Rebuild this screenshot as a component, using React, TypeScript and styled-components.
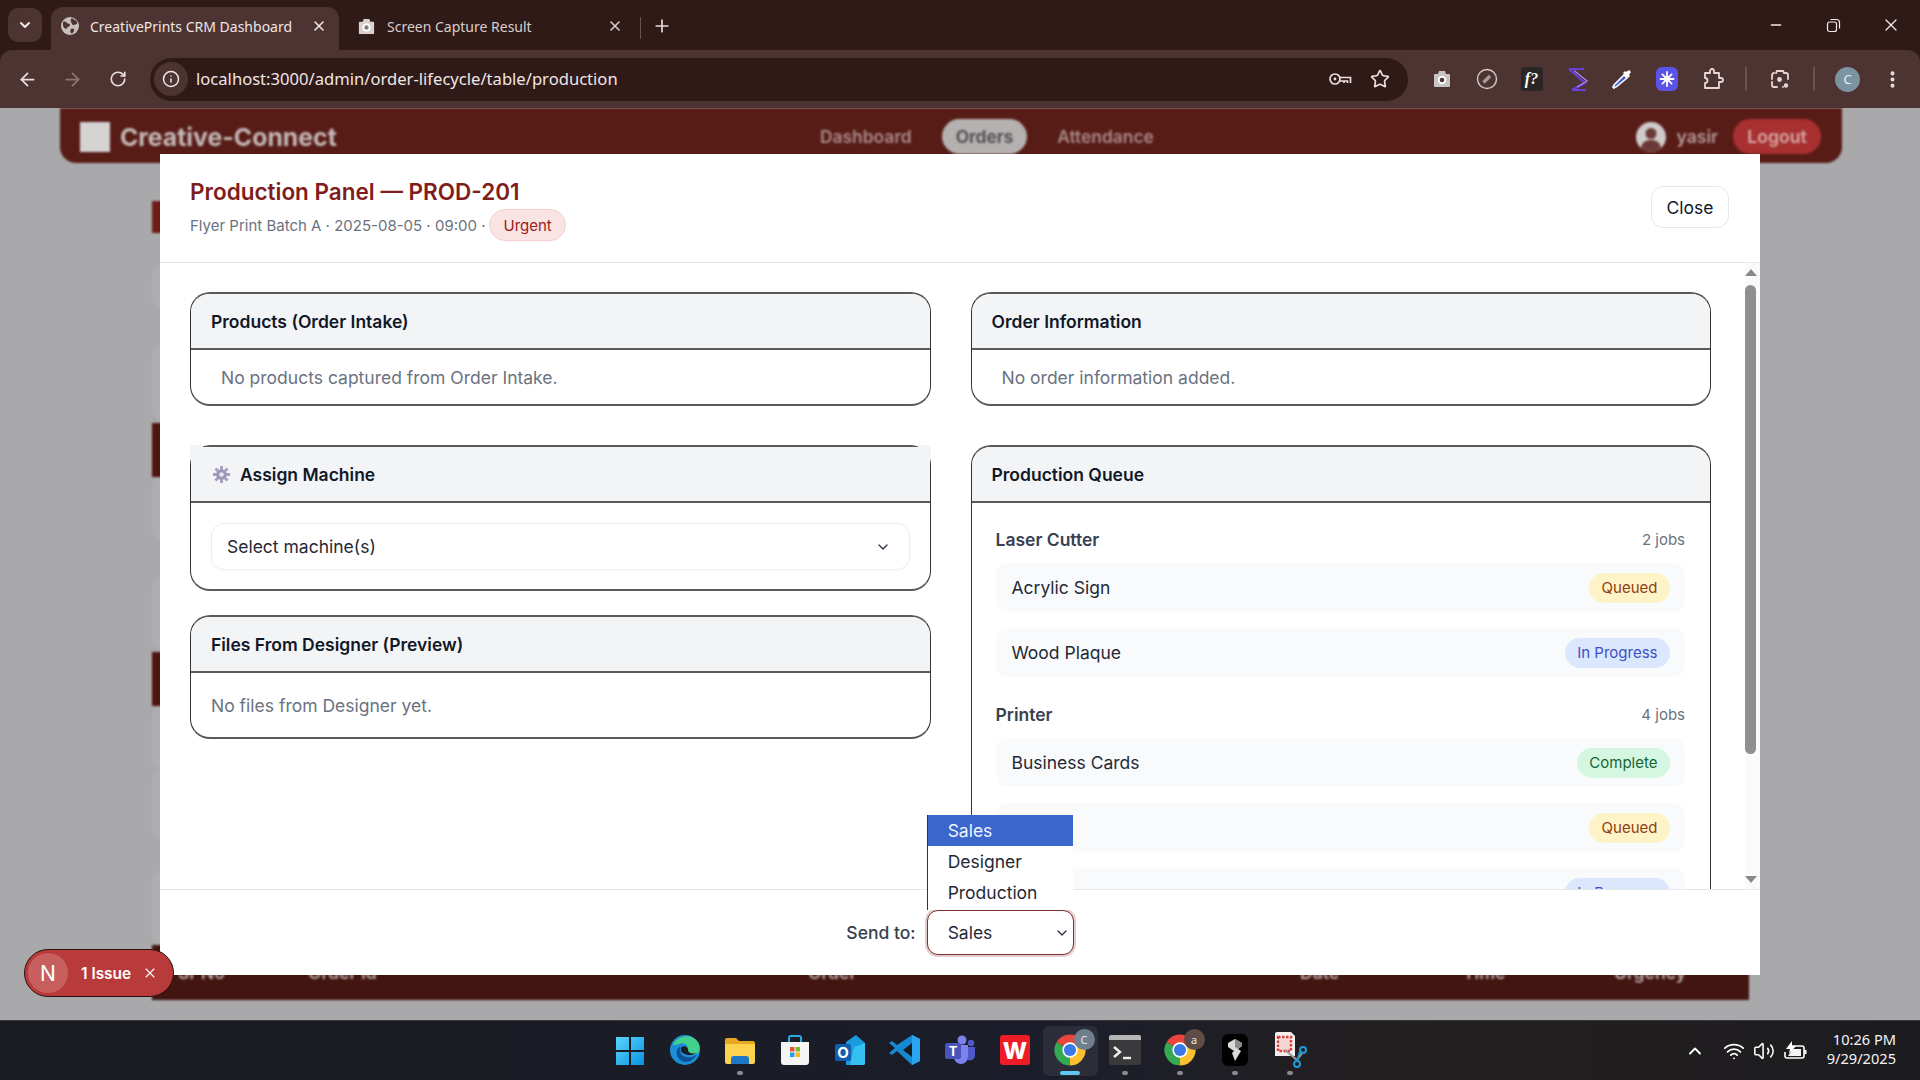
import React from "react";
import styled, { createGlobalStyle } from "styled-components";
import {
  ArrowLeft, ArrowRight, RotateCw, Info, Star, X, Plus, Minus, ChevronDown, ChevronUp,
  MoreVertical, Wifi, Volume2,
} from "lucide-react";

const Global = createGlobalStyle`
  html, body { margin: 0; padding: 0; width: 1920px; height: 1080px; overflow: hidden; background: #2f1a18; }
  * { box-sizing: border-box; }
`;

const Screen = styled.div`
  width: 1920px; height: 1080px; display: flex; flex-direction: column;
  font-family: Inter, "Liberation Sans", sans-serif;
`;

/* ---------- browser chrome ---------- */
const TabStrip = styled.div`
  height: 50px; flex: none; background: #2f1a18; display: flex; align-items: flex-end; padding-left: 8px;
  font-family: "Noto Sans", "Open Sans", sans-serif; color: #e8dedd;
`;
const TabSearch = styled.div`
  width: 34px; height: 34px; margin-bottom: 8px; margin-right: 9px; border-radius: 10px; background: #4d3432;
  display: flex; align-items: center; justify-content: center; color: #f2e9e8;
`;
const Tab = styled.div<{ $active?: boolean }>`
  width: ${(p) => (p.$active ? 288 : 300)}px; height: 43px; display: flex; align-items: center;
  padding: 0 ${(p) => (p.$active ? 12 : 16)}px 5px ${(p) => (p.$active ? 9 : 18)}px; gap: ${(p) => (p.$active ? 10 : 11)}px;
  border-radius: 12px 12px 0 0; font-size: 14px; background: ${(p) => (p.$active ? "#4d3432" : "transparent")};
  color: ${(p) => (p.$active ? "#efe6e5" : "#d9cdcc")};
`;
const TabTitle = styled.span` flex: 1; white-space: nowrap; `;
const TabDivider = styled.div` width: 1px; height: 22px; background: #6a5250; margin: 0 11px 11px 1px; `;
const NewTab = styled.div` margin-bottom: 14px; color: #e8dedd; display: flex; `;
const WindowButtons = styled.div` margin-left: auto; display: flex; height: 50px; align-items: center; `;
const WindowButton = styled.div`
  width: 57.5px; height: 100%; display: flex; align-items: center; justify-content: center; color: #f2ecec;
`;

const Toolbar = styled.div`
  height: 58px; flex: none; background: #4d3432; border-radius: 12px 12px 0 0; display: flex; align-items: center;
  padding: 0 5px; color: #e8dedd; font-family: "Noto Sans", "Open Sans", sans-serif;
`;
const ToolButton = styled.div<{ $dim?: boolean }>`
  width: 45px; height: 45px; flex: none; display: flex; align-items: center; justify-content: center;
  color: ${(p) => (p.$dim ? "#8d7674" : "#eadfde")};
`;
const Omnibox = styled.div`
  flex: 1; height: 43px; margin: 0 11px 0 10px; border-radius: 22px; background: #2f1a18; display: flex; align-items: center;
  padding: 0 18px 0 4px; color: #efe6e5; font-size: 16.6px;
`;
const InfoChip = styled.div`
  width: 34px; height: 34px; border-radius: 50%; background: #4d3432; display: flex; align-items: center; justify-content: center; margin-right: 8px;
`;
const Url = styled.span` flex: 1; white-space: nowrap; padding-bottom: 2px; `;
const OmniIcons = styled.div` display: flex; gap: 18px; align-items: center; color: #eadfde; `;
const Separator = styled.div` width: 2px; height: 24px; background: #6a5250; flex: none; margin: 0 10.5px; `;
const Avatar = styled.div`
  width: 25px; height: 25px; border-radius: 50%; background: #7c93a2; color: #e9eef1; font-size: 13px;
  display: flex; align-items: center; justify-content: center;
`;
const FBadge = styled.div`
  width: 22px; height: 24px; background: #2b2626; border-radius: 3px; color: #fff; font: italic 700 16px "Liberation Serif", serif;
  display: flex; align-items: center; justify-content: center;
`;

/* ---------- blurred page behind the dialog ---------- */
const Viewport = styled.div` flex: 1; position: relative; overflow: hidden; background: #a9a9ab; `;
const Backdrop = styled.div` height: 100%; filter: blur(1.2px); `;
const TopNav = styled.div`
  height: 55px; margin: 0 78px 0 60px; background: #581c17; border-radius: 0 0 16px 16px;
  display: flex; align-items: center; position: relative; padding: 2px 21px 0 20px; color: #c9b4b2;
`;
const Logo = styled.div` width: 30px; height: 30px; background: #d6d3d3; margin-right: 10px; flex: none; `;
const Brand = styled.div` font-size: 24.8px; font-weight: 700; color: #c4b9b8; width: 215px; white-space: nowrap; `;
const NavLinks = styled.div` display: flex; align-items: center; margin-left: 485px; gap: 30px; font-size: 17.4px; font-weight: 600; color: #a98a88; margin-top: -1px; `;
const NavPill = styled.div` padding: 7px 14px; border-radius: 20px; background: #b4b1b0; color: #4a4a4a; `;
const NavUser = styled.div` margin-left: auto; display: flex; align-items: center; font-size: 17.6px; font-weight: 600; color: #b39a98; `;
const UserIcon = styled.svg` width: 30px; height: 30px; margin-right: 10px; `;
const LogoutPill = styled.div` margin-left: 15px; width: 88px; height: 35px; border-radius: 18px; background: #a83030; color: #d8acab; display: flex; align-items: center; justify-content: center; `;
const PageColumn = styled.div` margin: 38px 0 0 152px; width: 1597px; display: flex; flex-direction: column; `;
const PageBlock = styled.div<{ $tone: string; $h: number; $after: number }>`
  height: ${(p) => p.$h}px; margin-bottom: ${(p) => p.$after}px; border-radius: ${(p) => (p.$tone === "card" ? 10 : 0)}px;
  background: ${(p) => (p.$tone === "dark" ? "#4f1512" : p.$tone === "title" ? "#6f1c18" : "#aeaeb0")};
`;
const TableHead = styled.div`
  height: 55px; background: #431510; display: grid; grid-template-columns: 130px 500px 492px 163px 151px 1fr; padding-left: 26px;
  color: #b9a8a6; font-weight: 600; font-size: 17.6px; line-height: 56px;
`;

const blocks = [
  { tone: "title", h: 32, after: 33 },
  { tone: "card", h: 42, after: 38 },
  { tone: "card", h: 74, after: 3 },
  { tone: "dark", h: 54, after: 0 },
  { tone: "card", h: 63, after: 38 },
  { tone: "card", h: 72, after: 2 },
  { tone: "dark", h: 54, after: 0 },
  { tone: "card", h: 64, after: 0 },
  { tone: "card", h: 70, after: 30 },
  { tone: "card", h: 75, after: 0 },
];

/* ---------- dialog ---------- */
const Modal = styled.div`
  position: absolute; left: 160px; top: 46px; width: 1600px; height: 821px; background: #fff;
  display: flex; flex-direction: column;
`;
const ModalHeader = styled.header`
  height: 109px; flex: none; border-bottom: 1px solid #e5e7eb; display: flex; align-items: center; justify-content: space-between;
  padding: 0 31px 0 30px;
`;
const Heading = styled.div` display: flex; flex-direction: column; padding-top: 2px; `;
const Title = styled.div` font-size: 22.5px; font-weight: 600; color: #7f1d1d; line-height: 30px; `;
const Meta = styled.div` display: flex; align-items: center; gap: 4px; margin-top: 2px; font-size: 15px; color: #6b7280; `;
const UrgentBadge = styled.span`
  height: 32px; padding: 0 13px; border-radius: 16px; background: #fae3e3; border: 1px solid #f5cfcf; color: #991b1b;
  display: flex; align-items: center; font-size: 15px; font-weight: 400;
`;
const CloseButton = styled.div`
  width: 78px; height: 42px; border: 1px solid #e5e7eb; border-radius: 12px; display: flex; align-items: center; justify-content: center;
  font-size: 17.5px; color: #111827; margin-top: -2px;
`;
const BodyRow = styled.div` flex: 1; min-height: 0; display: flex; background: #fff; `;
const ScrollArea = styled.div` flex: 1; min-width: 0; overflow: hidden; `;
const ScrollRail = styled.div`
  width: 15px; flex: none; background: #fafafa; display: flex; flex-direction: column; align-items: flex-start; padding: 6px 0;
`;
const RailArrow = styled.svg<{ $down?: boolean }>`
  width: 12px; height: 7px; flex: none; margin-top: ${(p) => (p.$down ? "auto" : "0")};
`;
const RailThumb = styled.div` width: 11px; height: 469px; margin-top: 9px; border-radius: 6px; background: #8f8f8f; `;
const Panels = styled.div`
  display: grid; grid-template-columns: 740.5px 740.5px; column-gap: 40px; row-gap: 39px; align-items: start;
  padding: 29px 34px 40px 30px;
`;
const Stack = styled.div` display: flex; flex-direction: column; gap: 24px; `;
const Card = styled.section<{ $clipped?: boolean }>`
  border-style: solid; border-color: #5a5a5a #333; border-width: 2px 1px; border-radius: 20px; background: #fff; position: relative;
  overflow: ${(p) => (p.$clipped ? "visible" : "hidden")};
`;
const CardHeader = styled.div<{ $square?: boolean }>`
  height: 56px; background: #f3f4f6; border-bottom: 2px solid #5a5a5a; display: flex; align-items: center; gap: ${(p) => (p.$square ? 9 : 8)}px;
  padding: 0 ${(p) => (p.$square ? 21 : 20)}px; font-size: 17.5px; font-weight: 600; color: #111827; position: relative;
  ${(p) => p.$square && `
    &::before, &::after { content: ""; position: absolute; top: -2px; width: 13px; height: 14px; background: #f3f4f6; }
    &::before { left: -1px; }
    &::after { right: -1px; }
  `}
`;
const EmptyText = styled.div<{ $inset: number; $h: number }>`
  height: ${(p) => p.$h}px; display: flex; align-items: center; padding: 0 ${(p) => p.$inset}px; font-size: 17.5px; color: #6b7280;
`;
const MachineBody = styled.div` padding: 20px 20px 19px; `;
const MachineSelect = styled.div`
  height: 47px; border: 1px solid #eceef1; border-radius: 13px; display: flex; align-items: center; justify-content: space-between;
  padding: 0 18px 0 15px; font-size: 17.5px; color: #1f2937; box-shadow: 0 1px 2px rgba(0,0,0,.03);
`;
const QueueBody = styled.div` padding: 21px 25px 14px 24px; `;
const QueueGroup = styled.div` margin-bottom: 22px; `;
const GroupHead = styled.div` display: flex; align-items: center; justify-content: space-between; height: 31px; margin-bottom: 8px; `;
const GroupName = styled.span` font-size: 17.5px; font-weight: 600; color: #374151; `;
const GroupCount = styled.span` font-size: 15px; color: #6b7280; `;
const JobRow = styled.div`
  height: 49px; background: #f9fafb; border-radius: 12px; display: flex; align-items: center; justify-content: space-between;
  padding: 0 15px 0 16px; font-size: 17.5px; color: #1f2937; margin-bottom: 16px;
  &:last-child { margin-bottom: 0; }
`;
const statusColors: Record<string, [string, string]> = {
  Queued: ["#fdf3c7", "#92400e"],
  "In Progress": ["#dbe7fc", "#3b50c4"],
  Complete: ["#d5f7e2", "#166534"],
};
const Status = styled.span<{ $s: string }>`
  height: 30px; padding: 0 12.5px; border-radius: 15px; display: flex; align-items: center; font-size: 15px; font-weight: 400;
  background: ${(p) => statusColors[p.$s][0]}; color: ${(p) => statusColors[p.$s][1]};
`;
const ModalFooter = styled.footer`
  height: 86px; flex: none; border-top: 1px solid #e5e7eb; display: flex; align-items: center; justify-content: center; gap: 11px;
  background: #fff; position: relative; z-index: 2;
`;
const SendLabel = styled.span` font-size: 17.5px; font-weight: 500; color: #374151; `;
const SelectWrap = styled.div` position: relative; `;
const SendSelect = styled.div`
  width: 147px; height: 45px; border: 1.5px solid #7f2f2f; border-radius: 11px; box-shadow: 0 0 0 2px rgba(127,29,29,.22);
  display: flex; align-items: center; justify-content: space-between; padding: 0 3px 0 20px; font-size: 17.5px; color: #1f2937; background: #fff;
`;
const Options = styled.div`
  position: absolute; left: 0; bottom: 45px; width: 146px; height: 95px; background: #fff; border-left: 1.5px solid #333;
  display: flex; flex-direction: column; font-size: 17.5px; color: #1f2937;
`;
const Option = styled.div<{ $on?: boolean }>`
  height: 31px; flex: none; display: flex; align-items: center; padding-left: 20px;
  background: ${(p) => (p.$on ? "#3b66cc" : "transparent")}; color: ${(p) => (p.$on ? "#f0f4ff" : "inherit")};
`;

/* ---------- dev toast ---------- */
const Toast = styled.div`
  position: absolute; left: 24px; top: 841px; width: 150px; height: 48px; border-radius: 24px; background: #b83a3a;
  border: 1.5px solid #2a1010; display: flex; align-items: center; padding-left: 3px; color: #fff; font-size: 15.4px; font-weight: 600; z-index: 3;
`;
const ToastLogo = styled.div`
  width: 40px; height: 40px; border-radius: 50%; background: #c85f5f; font-size: 21px; font-weight: 400; display: flex; align-items: center; justify-content: center; margin-right: 13px;
`;
const ToastText = styled.span` margin-right: 11px; white-space: nowrap; `;

/* ---------- taskbar ---------- */
const Taskbar = styled.div`
  height: 60px; flex: none; display: grid; grid-template-columns: 1fr auto 1fr; align-items: center;
  background: linear-gradient(90deg, #1b1c21 0%, #1a1d27 40%, #1b1e2a 55%, #241f1f 75%, #1c1c20 100%); border-top: 1px solid #37373b;
`;
const TaskIcons = styled.div` display: flex; padding-left: 0; `;
const TaskSlot = styled.div<{ $active?: boolean }>`
  width: 55px; height: 50px; position: relative; display: flex; align-items: center; justify-content: center; border-radius: 6px; padding-bottom: 1px;
  background: ${(p) => (p.$active ? "rgba(255,255,255,.07)" : "transparent")};
`;
const RunDot = styled.span<{ $active?: boolean }>`
  position: absolute; bottom: 1px; left: 50%; transform: translateX(-50%); height: 4px; border-radius: 2px;
  width: ${(p) => (p.$active ? 20 : 6)}px; background: ${(p) => (p.$active ? "#5fc6f2" : "#8b8b8f")};
`;
const ProfileBadge = styled.span<{ $bg: string }>`
  position: absolute; top: 3px; right: 3px; width: 21px; height: 21px; border-radius: 50%; background: ${(p) => p.$bg};
  color: #e8e8e8; font-size: 11px; display: flex; align-items: center; justify-content: center; font-family: "Noto Sans", sans-serif;
`;
const Tray = styled.div` justify-self: end; display: flex; align-items: center; padding-right: 24px; color: #fff; `;
const TrayIcons = styled.div` display: flex; align-items: center; gap: 8px; margin-right: 20px; `;
const TrayChevron = styled.div` display: flex; margin-right: 18px; `;
const Clock = styled.div`
  text-align: right; font: 14.6px/19.5px "Noto Sans", "Open Sans", sans-serif; color: #f4f4f4; padding-bottom: 3px;
`;

/* ---------- drawn icons ---------- */
const ChromeLogo = ({ size = 34 }: { size?: number }) => (
  <svg width={size} height={size} viewBox="0 0 24 24">
    <path d="M12 12 2.47 6.5A11 11 0 0 1 21.53 6.5Z" fill="#e8453c" />
    <path d="M12 12 21.53 6.5A11 11 0 0 1 12 23Z" fill="#fbc02d" />
    <path d="M12 12 12 23A11 11 0 0 1 2.47 6.5Z" fill="#34a853" />
    <circle cx="12" cy="12" r="5.4" fill="#fff" />
    <circle cx="12" cy="12" r="4.3" fill="#3b78e7" />
  </svg>
);
const Globe = () => (
  <svg width="20" height="20" viewBox="0 0 20 20">
    <circle cx="10" cy="10" r="9" fill="#c9bfbe" />
    <path d="M3 6c2-1 3 0 4 1s3 0 3 2-2 1-3 3-3 0-4-2zM12 2c1 2 4 1 5 4s-2 2-3 3-2-1-3-3 0-3 1-4zM11 13c2-1 4 0 3 2s-2 3-3 2-1-3 0-4z" fill="#4d3432" />
  </svg>
);
const CameraIcon = ({ size = 20, fill = "#c9c4c3", lens = "#4d3432" }: { size?: number; fill?: string; lens?: string }) => (
  <svg width={size} height={size} viewBox="0 0 20 20">
    <path d="M7 2h6l1 3h3a1 1 0 0 1 1 1v11a1 1 0 0 1-1 1H3a1 1 0 0 1-1-1V6a1 1 0 0 1 1-1h3z" fill={fill} />
    <circle cx="10" cy="11" r="4.2" fill="#fff" />
    <circle cx="10" cy="11" r="2.3" fill={lens} />
  </svg>
);
const KeyIcon = () => (
  <svg width="24" height="18" viewBox="0 0 24 18" fill="none" stroke="#eadfde" strokeWidth="1.7">
    <circle cx="7" cy="9" r="5" />
    <circle cx="7" cy="9" r="1.4" fill="#eadfde" stroke="none" />
    <path d="M12 7.500h10.500v5.500M12 11h7.500v2M16 11v2" />
  </svg>
);
const PencilCircle = () => (
  <svg width="22" height="22" viewBox="0 0 22 22" fill="none">
    <circle cx="11" cy="11" r="9.5" stroke="#d6c9c8" strokeWidth="1.4" />
    <path d="M7.5 14.5 14 8" stroke="#a79a99" strokeWidth="3.4" />
  </svg>
);
const SwirlS = () => (
  <svg width="24" height="26" viewBox="0 0 24 26" fill="none">
    <path d="M4 3H19M4 3 20 17 7 24H21" stroke="#6a3fd6" strokeWidth="2.2" />
    <path d="M9 4.500 22 15 12 21" stroke="#a88bf0" strokeWidth="1.2" />
  </svg>
);
const Dropper = () => (
  <svg width="24" height="24" viewBox="0 0 24 24" fill="none">
    <path d="M5 20 4 21l-1-1 1-2L14 8l3 3L6 20Z" fill="#3f5bd0" stroke="#fff" strokeWidth="1.6" />
    <path d="M13 6l5 5 2-2-1-1 2-3-2-2-3 2-1-1z" fill="#fff" />
  </svg>
);
const SparkSquare = () => (
  <svg width="22" height="24" viewBox="0 0 22 24">
    <rect width="22" height="24" rx="6" fill="#5b53e8" />
    <g stroke="#fff" strokeWidth="1.8" strokeLinecap="round">
      <path d="M11 5v14M4.5 12h13M6.4 7.4l9.2 9.2M15.6 7.4l-9.2 9.2" />
    </g>
    <circle cx="11" cy="12" r="3" fill="#fff" />
  </svg>
);
const PuzzleIcon = () => (
  <svg width="24" height="24" viewBox="0 0 24 24" fill="none" stroke="#e6d8d6" strokeWidth="1.8" strokeLinejoin="round">
    <path d="M5 6h5V4a2 2 0 0 1 4 0v2h5v5h2a2 2 0 0 1 0 4h-2v6H5v-5a2.500 2.500 0 0 0 0-5z" />
  </svg>
);
const LensIcon = () => (
  <svg width="22" height="22" viewBox="0 0 22 22" fill="none" stroke="#e6d8d6" strokeWidth="1.8" strokeLinecap="round">
    <path d="M7 5 8 3h6l1 2h2a2 2 0 0 1 2 2v4M3 11V7a2 2 0 0 1 2-2M3 14v3a2 2 0 0 0 2 2h3M14 19h0" />
    <circle cx="10.5" cy="11.5" r="2.4" fill="#e6d8d6" stroke="none" />
    <circle cx="17" cy="17.5" r="2.2" fill="#e6d8d6" stroke="none" />
  </svg>
);
const RestoreIcon = () => (
  <svg width="15" height="15" viewBox="0 0 15 15" fill="none" stroke="#f2ecec" strokeWidth="1.2">
    <rect x="1.5" y="4" width="9" height="9.5" rx="2" />
    <path d="M4.5 1.5h6a3 3 0 0 1 3 3v6" />
  </svg>
);
const GearIcon = () => (
  <svg width="19" height="19" viewBox="0 0 20 20">
    <g stroke="#a79fc0" strokeWidth="3">
      <path d="M10 1v18M1 10h18M3.6 3.6l12.8 12.8M16.4 3.6 3.6 16.4" />
    </g>
    <circle cx="10" cy="10" r="5.6" fill="#9f97b9" />
    <circle cx="10" cy="10" r="2.4" fill="#e9e6f1" />
  </svg>
);
const BatteryIcon = () => (
  <svg width="24" height="22" viewBox="0 0 24 22" fill="none" stroke="#fff" strokeWidth="1.6">
    <path d="M8 6H19a2 2 0 0 1 2 2v8a2 2 0 0 1-2 2H4a2 2 0 0 1-2-2v-4" />
    <path d="M22.500 10v4" strokeWidth="2" />
    <path d="M9 1 3 9h4l-1 5 7-8H9z" fill="#fff" stroke="none" />
    <path d="M5 16h13V9H10z" fill="#fff" stroke="none" opacity=".95" />
  </svg>
);
const WinLogo = () => (
  <svg width="30" height="30" viewBox="0 0 30 30">
    <defs>
      <linearGradient id="wg" x1="0" y1="0" x2="1" y2="1"><stop offset="0" stopColor="#5ad6fb" /><stop offset="1" stopColor="#0a93e2" /></linearGradient>
    </defs>
    <path d="M1 2h13v13H1zM16 2h13v13H16zM1 17h13v13H1zM16 17h13v13H16z" fill="url(#wg)" />
  </svg>
);
const EdgeLogo = () => (
  <svg width="32" height="32" viewBox="0 0 32 32">
    <circle cx="16" cy="16" r="15" fill="#1b8fd6" />
    <path d="M4 11C7 2 22-2 29 8c3 5 2 11-2 12-4 1-9 0-8-4 1-5-5-8-9-6-3 1-5 1-6 1z" fill="#43cf8c" />
    <path d="M13 27c-6-3-8-12-1-15-3 4 0 10 5 11 4 1 8 0 11-3-3 6-10 10-15 7z" fill="#0c4f95" />
    <path d="M12 14c2-3 7-2 7 2 0 3 4 4 8 3-2 2-8 3-11 1-3-1-5-3-4-6z" fill="#1b1c21" />
  </svg>
);
const FolderLogo = () => (
  <svg width="32" height="30" viewBox="0 0 32 30">
    <path d="M1 5a2 2 0 0 1 2-2h9l3 3h14a2 2 0 0 1 2 2v2H1z" fill="#e9a821" />
    <path d="M1 9h30v18a2 2 0 0 1-2 2H3a2 2 0 0 1-2-2z" fill="#fcd24e" />
    <path d="M7 29v-5a3 3 0 0 1 3-3h12a3 3 0 0 1 3 3v5z" fill="#1c78c6" />
  </svg>
);
const StoreLogo = () => (
  <svg width="30" height="32" viewBox="0 0 30 32" fill="none">
    <path d="M9 9V4a2 2 0 0 1 2-2h8a2 2 0 0 1 2 2v5" stroke="#2aa8e8" strokeWidth="2" />
    <path d="M1 8h28v20a3 3 0 0 1-3 3H4a3 3 0 0 1-3-3z" fill="#f4f4f4" />
    <path d="M10 13h4.5v4.5H10z" fill="#e8533a" /><path d="M15.5 13H20v4.5h-4.5z" fill="#7cbb2c" />
    <path d="M10 18.500h4.500V23H10z" fill="#2a9fe8" /><path d="M15.500 18.500H20V23h-4.500z" fill="#fbbb1a" />
  </svg>
);
const OutlookLogo = () => (
  <svg width="32" height="32" viewBox="0 0 32 32">
    <path d="M12 8 22 1l9 8v20a2 2 0 0 1-2 2H12z" fill="#1a9be0" />
    <path d="M20 13l11-4v20a2 2 0 0 1-2 2H16z" fill="#36c0f2" />
    <rect x="1" y="10" width="16" height="17" rx="2" fill="#0f5fb0" />
    <text x="9" y="24" fontSize="15" fontFamily="Inter, sans-serif" fontWeight="700" fill="#fff" textAnchor="middle">O</text>
  </svg>
);
const VsLogo = () => (
  <svg width="32" height="32" viewBox="0 0 32 32">
    <path d="M23 1 31 5v22l-8 4L8 17l-5 4-3-2 6-5-6-5 3-2 5 4z" fill="#1788d2" />
    <path d="M23 9v14l-9-7z" fill="#1b1c21" />
    <path d="M23 1 31 5v22l-8 4z" fill="#2aa4ee" />
  </svg>
);
const TeamsLogo = () => (
  <svg width="32" height="32" viewBox="0 0 32 32">
    <circle cx="18" cy="6" r="4.500" fill="#7b83eb" /><circle cx="27" cy="9" r="3.200" fill="#5059c9" />
    <path d="M22 13h9v9a5 5 0 0 1-7 4z" fill="#5059c9" />
    <path d="M10 11h14v12a7 7 0 0 1-14 0z" fill="#7b83eb" />
    <rect x="1" y="9" width="16" height="16" rx="2" fill="#4b53bc" />
    <text x="9" y="22" fontSize="13" fontFamily="Inter, sans-serif" fontWeight="700" fill="#fff" textAnchor="middle">T</text>
  </svg>
);
const WpsLogo = () => (
  <svg width="30" height="30" viewBox="0 0 30 30">
    <rect width="30" height="30" rx="3" fill="#ee1c27" />
    <text x="15" y="24" fontSize="23" fontFamily="Inter, sans-serif" fontWeight="800" fill="#fff" textAnchor="middle">W</text>
  </svg>
);
const TerminalLogo = () => (
  <svg width="32" height="32" viewBox="0 0 32 32" fill="none">
    <rect y="1" width="32" height="30" rx="2" fill="#3a3a3c" />
    <path d="M0 3a2 2 0 0 1 2-2h28a2 2 0 0 1 2 2v3H0z" fill="#b5b5b5" />
    <path d="M5 13l6 5-6 5" stroke="#f0f0f0" strokeWidth="2.400" />
    <path d="M14 24h8" stroke="#f0f0f0" strokeWidth="2.400" />
  </svg>
);
const BlackAppLogo = () => (
  <svg width="26" height="32" viewBox="0 0 26 32">
    <rect width="26" height="32" rx="6" fill="#000" />
    <path d="M6 9l7-4 7 4v3l-4 3 3 2-6 10-3-8 2-2-6-4z" fill="#d9d9d9" />
    <path d="M13 5l7 4v3l-4 3-3-2z" fill="#8a8a8a" />
  </svg>
);
const SnipLogo = () => (
  <svg width="34" height="36" viewBox="0 0 34 36" fill="none">
    <path d="M2 2a2 2 0 0 1 2-2h14l4 4v20H2z" fill="#f2eeee" />
    <rect x="5" y="5" width="13" height="14" stroke="#d8433f" strokeWidth="2.400" strokeDasharray="2.500 1.500" fill="#f6d6d4" />
    <path d="M12 18l12 10 6-8" stroke="#9a9a9a" strokeWidth="2" />
    <circle cx="30" cy="18" r="3" stroke="#1e98d6" strokeWidth="2" />
    <circle cx="24" cy="32" r="3" stroke="#1e98d6" strokeWidth="2" />
    <path d="M27 20 24 29" stroke="#1e98d6" strokeWidth="2" />
  </svg>
);

const ChevronSmall = ({ size = 16 }: { size?: number }) => <ChevronDown size={size} color="#1f2937" strokeWidth={1.8} />;

const jobs = {
  laser: [["Acrylic Sign", "Queued"], ["Wood Plaque", "In Progress"]],
  printer: [["Business Cards", "Complete"], ["Flyers", "Queued"], ["Posters", "In Progress"], ["Labels", "Queued"]],
};

const tasks: { key: string; node: React.ReactNode; dot?: boolean; active?: boolean; badge?: [string, string] }[] = [
  { key: "win", node: <WinLogo /> },
  { key: "edge", node: <EdgeLogo /> },
  { key: "folder", node: <FolderLogo />, dot: true },
  { key: "store", node: <StoreLogo /> },
  { key: "outlook", node: <OutlookLogo /> },
  { key: "vs", node: <VsLogo /> },
  { key: "teams", node: <TeamsLogo /> },
  { key: "wps", node: <WpsLogo /> },
  { key: "chrome", node: <ChromeLogo />, dot: true, active: true, badge: ["C", "#6f7f8d"] },
  { key: "term", node: <TerminalLogo />, dot: true },
  { key: "chrome2", node: <ChromeLogo />, dot: true, badge: ["a", "#5e4c46"] },
  { key: "black", node: <BlackAppLogo />, dot: true },
  { key: "snip", node: <SnipLogo />, dot: true },
];

export default function App() {
  return (
    <Screen>
      <Global />
      <TabStrip>
        <TabSearch><ChevronDown size={16} strokeWidth={3} /></TabSearch>
        <Tab $active><Globe /><TabTitle>CreativePrints CRM Dashboard</TabTitle><X size={16} strokeWidth={2.4} /></Tab>
        <Tab><CameraIcon size={19} fill="#d9d0cf" lens="#8a7a78" /><TabTitle>Screen Capture Result</TabTitle><X size={16} strokeWidth={2.4} /></Tab>
        <TabDivider />
        <NewTab><Plus size={20} strokeWidth={2} /></NewTab>
        <WindowButtons>
          <WindowButton><Minus size={16} /></WindowButton>
          <WindowButton><RestoreIcon /></WindowButton>
          <WindowButton><X size={20} strokeWidth={1.5} /></WindowButton>
        </WindowButtons>
      </TabStrip>
      <Toolbar>
        <ToolButton><ArrowLeft size={21} strokeWidth={2} /></ToolButton>
        <ToolButton $dim><ArrowRight size={21} strokeWidth={2} /></ToolButton>
        <ToolButton><RotateCw size={18} strokeWidth={2.2} /></ToolButton>
        <Omnibox>
          <InfoChip><Info size={18} strokeWidth={2} /></InfoChip>
          <Url>localhost:3000/admin/order-lifecycle/table/production</Url>
          <OmniIcons><KeyIcon /><Star size={20} strokeWidth={2} /></OmniIcons>
        </Omnibox>
        <ToolButton><CameraIcon /></ToolButton>
        <ToolButton><PencilCircle /></ToolButton>
        <ToolButton><FBadge>f?</FBadge></ToolButton>
        <ToolButton><SwirlS /></ToolButton>
        <ToolButton><Dropper /></ToolButton>
        <ToolButton><SparkSquare /></ToolButton>
        <ToolButton><PuzzleIcon /></ToolButton>
        <Separator />
        <ToolButton><LensIcon /></ToolButton>
        <Separator />
        <ToolButton><Avatar>C</Avatar></ToolButton>
        <ToolButton><MoreVertical size={21} strokeWidth={2.6} /></ToolButton>
      </Toolbar>

      <Viewport>
        <Backdrop>
          <TopNav>
            <Logo />
            <Brand>Creative-Connect</Brand>
            <NavLinks><span>Dashboard</span><NavPill>Orders</NavPill><span>Attendance</span></NavLinks>
            <NavUser>
              <UserIcon viewBox="0 0 30 30">
                <circle cx="15" cy="15" r="15" fill="#cfcbca" />
                <circle cx="15" cy="11.500" r="5.500" fill="#6a3a36" />
                <path d="M5 26c1-7 6-8 10-8s9 1 10 8a15 15 0 0 1-20 0z" fill="#6a3a36" />
              </UserIcon>
              <span>yasir</span><LogoutPill>Logout</LogoutPill>
            </NavUser>
          </TopNav>
          <PageColumn>
            {blocks.map((b, i) => <PageBlock key={i} $tone={b.tone} $h={b.h} $after={b.after} />)}
            <TableHead><span>Sr No</span><span>Order Id</span><span>Order</span><span>Date</span><span>Time</span><span>Urgency</span></TableHead>
          </PageColumn>
        </Backdrop>

        <Modal>
          <ModalHeader>
            <Heading>
              <Title>Production Panel — PROD-201</Title>
              <Meta>Flyer Print Batch A · 2025-08-05 · 09:00 · <UrgentBadge>Urgent</UrgentBadge></Meta>
            </Heading>
            <CloseButton>Close</CloseButton>
          </ModalHeader>
          <BodyRow>
            <ScrollArea>
              <Panels>
                <Card>
                  <CardHeader>Products (Order Intake)</CardHeader>
                  <EmptyText $inset={30} $h={54}>No products captured from Order Intake.</EmptyText>
                </Card>
                <Card>
                  <CardHeader>Order Information</CardHeader>
                  <EmptyText $inset={30} $h={54}>No order information added.</EmptyText>
                </Card>
                <Stack>
                  <Card $clipped>
                    <CardHeader $square><GearIcon />Assign Machine</CardHeader>
                    <MachineBody>
                      <MachineSelect>Select machine(s)<ChevronSmall /></MachineSelect>
                    </MachineBody>
                  </Card>
                  <Card>
                    <CardHeader>Files From Designer (Preview)</CardHeader>
                    <EmptyText $inset={20} $h={64}>No files from Designer yet.</EmptyText>
                  </Card>
                </Stack>
                <Card>
                  <CardHeader>Production Queue</CardHeader>
                  <QueueBody>
                    <QueueGroup>
                      <GroupHead><GroupName>Laser Cutter</GroupName><GroupCount>2 jobs</GroupCount></GroupHead>
                      {jobs.laser.map(([n, s]) => <JobRow key={n}>{n}<Status $s={s}>{s}</Status></JobRow>)}
                    </QueueGroup>
                    <QueueGroup>
                      <GroupHead><GroupName>Printer</GroupName><GroupCount>4 jobs</GroupCount></GroupHead>
                      {jobs.printer.map(([n, s]) => <JobRow key={n}>{n}<Status $s={s}>{s}</Status></JobRow>)}
                    </QueueGroup>
                  </QueueBody>
                </Card>
              </Panels>
            </ScrollArea>
            <ScrollRail>
              <RailArrow viewBox="0 0 12 7"><path d="M6 0 12 7H0z" fill="#888" /></RailArrow>
              <RailThumb />
              <RailArrow $down viewBox="0 0 12 7"><path d="M6 7 0 0H12z" fill="#888" /></RailArrow>
            </ScrollRail>
          </BodyRow>
          <ModalFooter>
            <SendLabel>Send to:</SendLabel>
            <SelectWrap>
              <Options>
                <Option $on>Sales</Option>
                <Option>Designer</Option>
                <Option>Production</Option>
              </Options>
              <SendSelect>Sales<ChevronSmall /></SendSelect>
            </SelectWrap>
          </ModalFooter>
        </Modal>

        <Toast>
          <ToastLogo>N</ToastLogo>
          <ToastText>1 Issue</ToastText>
          <X size={16} strokeWidth={1.6} />
        </Toast>
      </Viewport>

      <Taskbar>
        <span />
        <TaskIcons>
          {tasks.map((t) => (
            <TaskSlot key={t.key} $active={t.active}>
              {t.node}
              {t.badge && <ProfileBadge $bg={t.badge[1]}>{t.badge[0]}</ProfileBadge>}
              {t.dot && <RunDot $active={t.active} />}
            </TaskSlot>
          ))}
        </TaskIcons>
        <Tray>
          <TrayChevron><ChevronUp size={20} strokeWidth={2.2} /></TrayChevron>
          <TrayIcons>
            <Wifi size={22} strokeWidth={2} />
            <Volume2 size={22} strokeWidth={1.7} />
            <BatteryIcon />
          </TrayIcons>
          <Clock>10:26 PM<br />9/29/2025</Clock>
        </Tray>
      </Taskbar>
    </Screen>
  );
}
